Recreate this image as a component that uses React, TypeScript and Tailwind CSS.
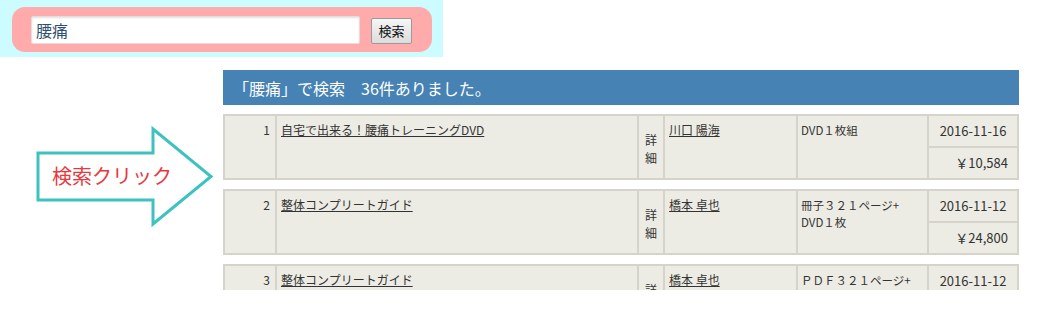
import React from 'react';

interface Item {
  no: number;
  title: string;
  author: string;
  desc: React.ReactNode;
  date: string;
  price: string;
}

const items: Item[] = [
  {
    no: 1,
    title: '自宅で出来る！腰痛トレーニングDVD',
    author: '川口 陽海',
    desc: 'DVD１枚組',
    date: '2016-11-16',
    price: '￥10,584',
  },
  {
    no: 2,
    title: '整体コンプリートガイド',
    author: '橋本 卓也',
    desc: (
      <>
        冊子３２１ページ+
        <br />
        DVD１枚
      </>
    ),
    date: '2016-11-12',
    price: '￥24,800',
  },
  {
    no: 3,
    title: '整体コンプリートガイド',
    author: '橋本 卓也',
    desc: (
      <>
        ＰＤＦ３２１ページ+
        <br />
        ＤＶＤ１枚（別途配送）
      </>
    ),
    date: '2016-11-12',
    price: '￥24,800',
  },
];

const cell = 'bg-[#edece4] text-[#333]';

const ResultRow: React.FC<{ item: Item }> = ({ item }) => (
  <div className="grid grid-cols-[50px_360px_24px_131px_129px_88px] grid-rows-[30px_30px] gap-[2px] p-[2px] bg-[#d6d3ca] mb-[9px]">
    <div className={`${cell} row-span-2 text-right text-[12px] leading-[18px] pt-[5px] pr-[5px]`}>{item.no}</div>
    <div className={`${cell} row-span-2 text-[12px] leading-[18px] pt-[5px] pl-[4px]`}>
      <a href="#" className="underline text-[#333]">{item.title}</a>
    </div>
    <div className={`${cell} row-span-2 flex items-center justify-center text-[12px] leading-[18px] px-[5px] pt-[4px]`}>
      <span className="w-[12px] break-all">詳細</span>
    </div>
    <div className={`${cell} row-span-2 text-[12px] leading-[18px] pt-[5px] pl-[4px]`}>
      <a href="#" className="underline text-[#333]">{item.author}</a>
    </div>
    <div className={`${cell} row-span-2 text-[11.5px] leading-[17px] pt-[6px] pl-[3px] whitespace-nowrap overflow-hidden`}>
      {item.desc}
    </div>
    <div className={`${cell} flex items-center justify-center text-[13px]`}>{item.date}</div>
    <div className={`${cell} flex items-center justify-end pr-[9px] text-[13px]`}>{item.price}</div>
  </div>
);

export default function App() {
  return (
    <div
      className="w-[1040px] h-[320px] bg-white overflow-hidden text-[#333]"
      style={{ fontFamily: '"Noto Sans CJK JP", "Noto Sans", sans-serif' }}
    >
      {/* search box */}
      <div className="w-[443px] h-[57px] bg-[#ccfcff] pt-[7px] pl-[12px]">
        <div className="w-[420px] h-[45px] rounded-[13px] bg-[#ffabab] flex items-center pl-[19px]">
          <input
            defaultValue="腰痛"
            className="w-[329px] h-[28px] bg-white border border-[#e2dede] rounded-[2px] pl-[4px] text-[16px] text-[#2f4f72] outline-none shadow-[inset_0_1px_2px_rgba(0,0,0,0.12)]"
          />
          <button className="ml-[11px] w-[41px] h-[26px] mt-[2px] border border-[#9a9a9a] rounded-[2px] bg-gradient-to-b from-[#f6f6f6] to-[#dcdcdc] text-[13px] text-[#111] leading-none">
            検索
          </button>
        </div>
      </div>

      <div className="flex mt-[13px]">
        {/* arrow */}
        <div className="relative w-[223px] h-[220px] shrink-0">
          <svg width="223" height="220" viewBox="0 0 223 220" className="absolute left-0 top-0">
            <polygon
              points="38,83 153,83 153,59 211,106.5 153,154 153,130 38,130"
              fill="#ffffff"
              stroke="#3ec2bf"
              strokeWidth="3"
              strokeLinejoin="miter"
            />
          </svg>
          <span className="absolute left-[52px] top-[95px] text-[20px] leading-[22px] text-[#e8383d] whitespace-nowrap">
            検索クリック
          </span>
        </div>

        {/* results */}
        <div className="w-[796px] h-[220px] overflow-hidden">
          <div className="h-[35px] bg-[#4682b4] flex items-center pl-[10px] text-white text-[16px] mb-[9px]">
            「腰痛」で検索　36件ありました。
          </div>
          {items.map((it) => (
            <ResultRow key={it.no} item={it} />
          ))}
        </div>
      </div>
    </div>
  );
}
